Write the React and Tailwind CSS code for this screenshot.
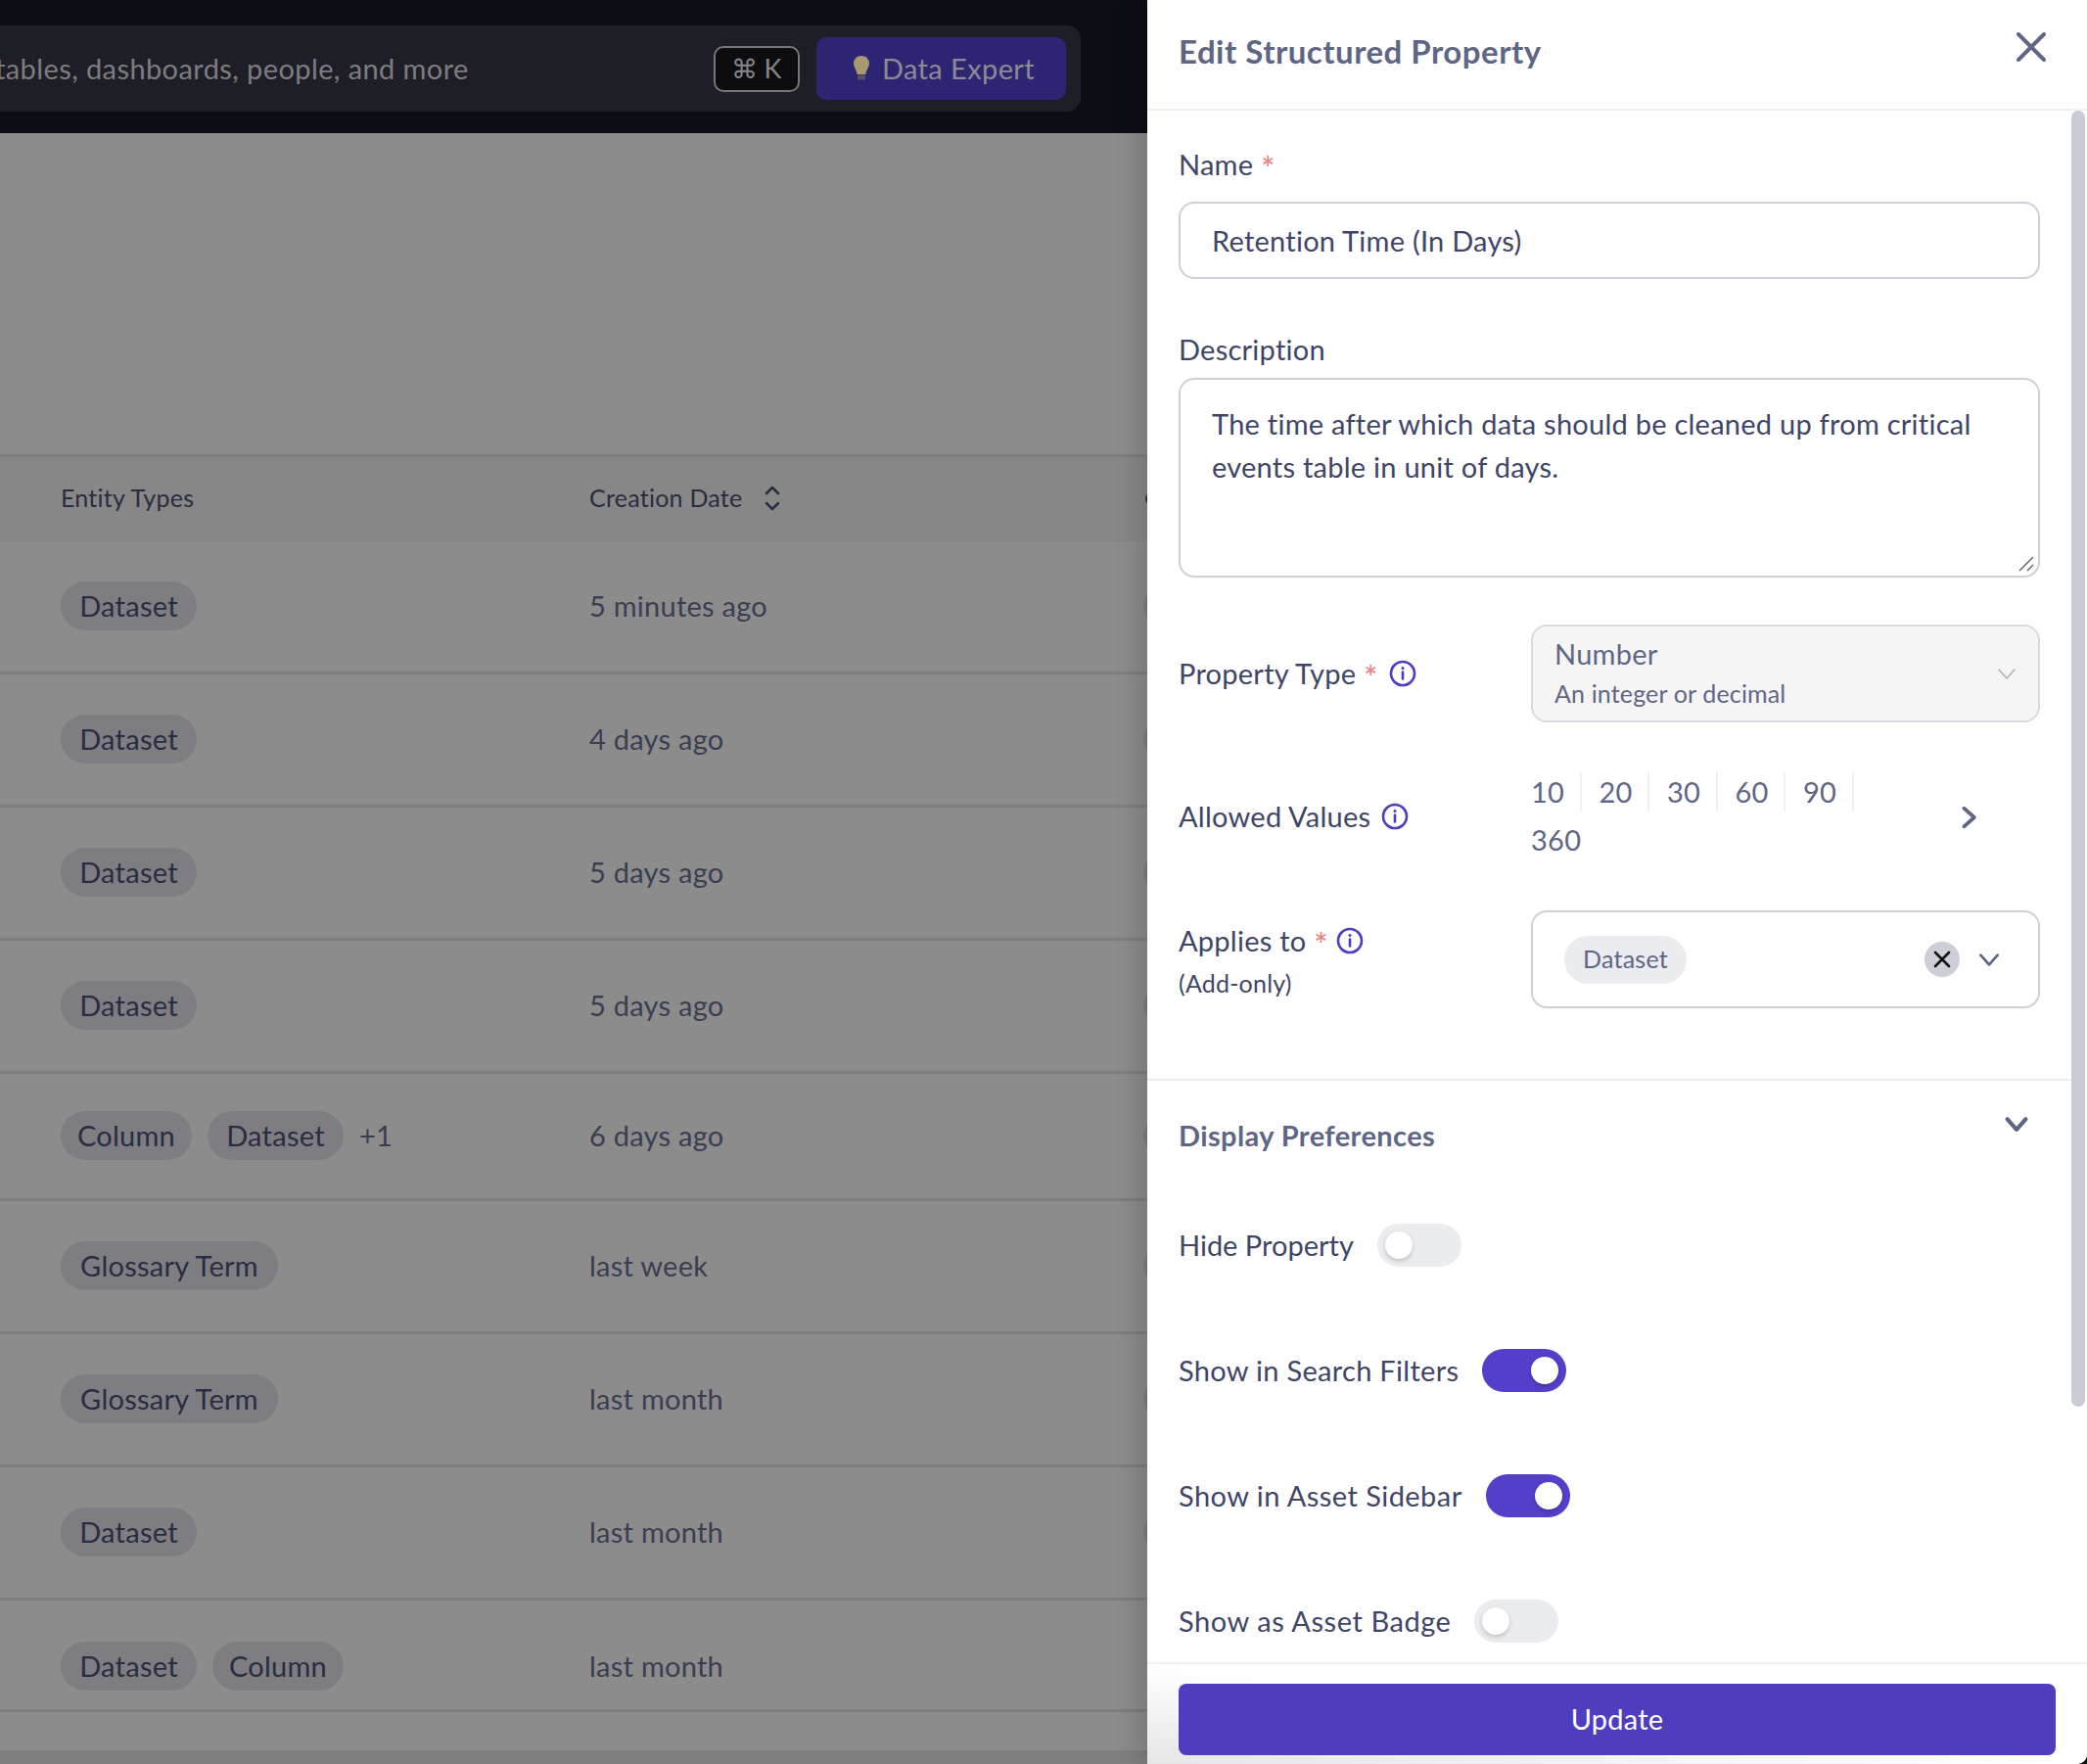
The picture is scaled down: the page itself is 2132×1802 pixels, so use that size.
const font = 'font-["Lato",sans-serif]';

const rows = [
    { tags: ['Dataset'], date: '5 minutes ago', h: 'h-[136px] pb-[2px]', avatar: true },
    { tags: ['Dataset'], date: '4 days ago', h: 'h-[136px] pb-[2px]', avatar: true },
    { tags: ['Dataset'], date: '5 days ago', h: 'h-[136px] pb-[2px]', avatar: true },
    { tags: ['Dataset'], date: '5 days ago', h: 'h-[136px] pb-[2px]', avatar: true },
    { tags: ['Column', 'Dataset'], extra: '+1', date: '6 days ago', h: 'h-[130px] pb-[2px]', avatar: true },
    { tags: ['Glossary Term'], date: 'last week', h: 'h-[136px] pb-[2px]', avatar: true },
    { tags: ['Glossary Term'], date: 'last month', h: 'h-[136px] pb-[2px]', avatar: true },
    { tags: ['Dataset'], date: 'last month', h: 'h-[136px] pb-[2px]', avatar: true },
    { tags: ['Dataset', 'Column'], date: 'last month', h: 'h-[114px] pt-[23px]' },
];

const tagWidths = {
    Dataset: 'w-[139px]',
    Column: 'w-[134px]',
    'Glossary Term': 'w-[222px]',
};

function InfoIcon() {
    return (
        <svg width="28" height="28" viewBox="0 0 28 28" fill="none" stroke="#4f3dbf" strokeWidth="2.600" className="shrink-0">
            <circle cx="14" cy="14" r="12" />
            <path d="M14 12.500v7" strokeLinecap="round" />
            <circle cx="14" cy="8.500" r="1.500" fill="#4f3dbf" stroke="none" />
        </svg>
    );
}

function Chevron({ className, color = '#5f6685', width = 3, size = 24 }) {
    return (
        <svg width={size} height={size} viewBox="0 0 24 24" fill="none" stroke={color} strokeWidth={width} strokeLinecap="round" strokeLinejoin="round" className={className}>
            <path d="M4 8l8 9 8-9" />
        </svg>
    );
}

function Star() {
    return <span className="text-[34px] leading-[0] align-[-6px] text-[#e5807f]">*</span>;
}

function Toggle({ on }) {
    return (
        <div className={`w-[86px] h-[44px] rounded-full flex items-center px-[8px] shrink-0 ${on ? 'bg-[#533fc9] justify-end' : 'bg-[#ebecf0] justify-start'}`}>
            <div className="w-[28px] h-[28px] rounded-full bg-white shadow-[0_2px_4px_rgba(0,0,0,0.2)]" />
        </div>
    );
}

function ToggleRow({ label, on, mt, tracking }) {
    return (
        <div className={`flex items-center gap-[24px] h-[44px] ${mt}`}>
            <span className={`text-[#3f4566] ${tracking}`}>{label}</span>
            <Toggle on={on} />
        </div>
    );
}

function Tag({ children }) {
    return <span className={`h-[50px] rounded-full bg-[#7e7e82] flex items-center justify-center text-[#2a2c40] ${tagWidths[children]}`}>{children}</span>;
}

export default function App() {
    return (
        <div className={`w-[2132px] h-[1802px] flex overflow-hidden bg-[#8c8c8c] text-[29px] tracking-[0.25px] ${font}`}>
            {/* dimmed page */}
            <div className="w-[1172px] h-full shrink-0 flex flex-col overflow-hidden">
                <div className="h-[136px] shrink-0 bg-[#0d0d14] flex items-start justify-end pt-[26px] pr-[68px]">
                    <div className="w-[1104px] h-[88px] bg-[#1d1e26] rounded-r-[14px] flex items-center justify-between pr-[15px] overflow-hidden">
                        <span className="text-[#7d7d80] whitespace-nowrap ml-[-5px] tracking-[0.4px]">tables, dashboards, people, and more</span>
                        <div className="flex items-center gap-[17px]">
                            <div className="w-[88px] h-[47px] rounded-[10px] border-2 border-[#77777a] bg-[#0d0d10] flex items-center justify-center text-[27px] text-[#858588] gap-[6px]">
                                <span>⌘</span><span>K</span>
                            </div>
                            <div className="w-[255px] h-[64px] rounded-[10px] bg-[#2d2473] flex items-center justify-center gap-[12px] text-[#8b8b93] tracking-[0.4px] pl-[5px]">
                                <svg width="18" height="28" viewBox="0 0 18 28">
                                    <path d="M9 1c4.600 0 8 3.400 8 7.800 0 3.800-3 6.400-3.600 11.200H4.600C4 15.200 1 12.600 1 8.800 1 4.400 4.400 1 9 1z" fill="#a8996f" />
                                    <rect x="5" y="20.500" width="8" height="5" rx="1.500" fill="#55555a" />
                                </svg>
                                <span>Data Expert</span>
                            </div>
                        </div>
                    </div>
                </div>
                <div className="h-[328px] shrink-0" />
                <div className="h-[89px] shrink-0 bg-[#878787] border-t-[3px] border-[#7e7e7e] flex items-center pl-[62px] text-[25px] text-[#2a2c40] pb-[2px]">
                    <span className="w-[540px] shrink-0">Entity Types</span>
                    <span className="shrink-0">Creation Date</span>
                    <svg width="18" height="28" viewBox="0 0 18 28" fill="none" stroke="#2a2c40" strokeWidth="2.500" strokeLinecap="round" strokeLinejoin="round" className="ml-[22px] shrink-0">
                        <path d="M3 9l6-6 6 6M3 19l6 6 6-6" />
                    </svg>
                    <div className="ml-auto w-[8px] h-[13px] rounded-l-full bg-[#2a2c40] mr-[-6px] shrink-0" />
                </div>
                {rows.map((r, i) => (
                    <div key={i} className={`${r.h} shrink-0 border-b-[3px] border-[#7e7e7e] flex items-center pl-[62px]`}>
                        <div className="w-[540px] flex items-center gap-[16px] shrink-0">
                            {r.tags.map(t => <Tag key={t}>{t}</Tag>)}
                            {r.extra && <span className="text-[#3b3d50]">{r.extra}</span>}
                        </div>
                        <span className="w-[566px] shrink-0 text-[#3b3d50]">{r.date}</span>
                        {r.avatar && <div className="w-[40px] h-[40px] rounded-full bg-[#7f7f80] shrink-0" />}
                    </div>
                ))}
                <div className="flex-1" />
                <div className="h-[14px] shrink-0 bg-[#7f7f7f]" />
            </div>

            {/* drawer */}
            <div className="w-[960px] h-full shrink-0 bg-[#111] shadow-[-10px_0_24px_rgba(0,0,0,0.14)]">
                <div className="w-full h-full bg-white flex flex-col rounded-br-[10px] overflow-hidden">
                    <div className="h-[113px] shrink-0 border-b-2 border-[#f0f0f2] flex items-start justify-between pl-[32px] pr-[42px]">
                        <span className="text-[33px] tracking-[0.5px] font-bold text-[#5f6685] mt-[28px]">Edit Structured Property</span>
                        <svg width="30" height="30" viewBox="0 0 30 30" stroke="#5f6685" strokeWidth="4" strokeLinecap="round" className="mt-[33px]">
                            <path d="M2 2l26 26M28 2L2 28" />
                        </svg>
                    </div>
                    <div className="flex-1 min-h-0 relative overflow-hidden pl-[32px] pr-[48px] text-[#3f4566]">
                        <div className="absolute right-[2px] top-0 w-[14px] h-[1324px] rounded-full bg-[#c9ccd4]" />
                        <div className="mt-[36px] leading-[38px]">Name <Star /></div>
                        <div className="mt-[19px] h-[79px] rounded-[16px] border-2 border-[#cdd0d8] flex items-center px-[32px]">Retention Time (In Days)</div>
                        <div className="mt-[53px] leading-[38px]">Description</div>
                        <div className="mt-[10px] h-[204px] rounded-[16px] border-2 border-[#cdd0d8] px-[32px] pt-[23px] leading-[44px] relative">
                            The time after which data should be cleaned up from critical events table in unit of days.
                            <svg width="20" height="20" viewBox="0 0 20 20" stroke="#666" strokeWidth="1.500" className="absolute right-[2px] bottom-[2px]">
                                <path d="M3 17L17 3M11 17l6-6" />
                            </svg>
                        </div>
                        <div className="mt-[48px] flex items-center h-[100px]">
                            <div className="w-[360px] shrink-0 flex items-center gap-[11px]">
                                <span>Property Type <Star /></span>
                                <InfoIcon />
                            </div>
                            <div className="flex-1 h-full rounded-[16px] border-2 border-[#d9dae0] bg-[#f5f5f5] flex items-center justify-between pl-[22px] pr-[20px]">
                                <div className="flex flex-col">
                                    <span className="leading-[40px] text-[#5f6685]">Number</span>
                                    <span className="text-[25px] tracking-[0.15px] leading-[40px] text-[#5f6685]">An integer or decimal</span>
                                </div>
                                <Chevron color="#aeb0b8" width={1.500} size={24} />
                            </div>
                        </div>
                        <div className="mt-[51px] flex items-start h-[96px]">
                            <div className="w-[360px] shrink-0 flex items-center gap-[11px] h-[90px]">
                                <span>Allowed Values</span>
                                <InfoIcon />
                            </div>
                            <div className="flex-1 flex items-center">
                                <div className="w-[450px] text-[#5f6685]">
                                    <div className="flex h-[40px] items-center">
                                        {['10', '20', '30', '60', '90'].map(v => (
                                            <span key={v} className="w-[51.500px] mr-[18px] h-[40px] flex items-center border-r-2 border-[#f0f0f2] shrink-0">{v}</span>
                                        ))}
                                    </div>
                                    <div className="h-[57px] flex items-center">360</div>
                                </div>
                                <Chevron className="-rotate-90 -ml-[17px] -mt-[5px]" size={28} width={3.200} />
                            </div>
                        </div>
                        <div className="mt-[45px] flex items-center h-[100px]">
                            <div className="w-[360px] shrink-0">
                                <div className="flex items-center gap-[8px] h-[40px]">
                                    <span>Applies to <Star /></span>
                                    <InfoIcon />
                                </div>
                                <div className="text-[25px] tracking-[0.2px] mt-[8px] leading-[30px]">(Add-only)</div>
                            </div>
                            <div className="flex-1 h-full rounded-[16px] border-2 border-[#cdd0d8] flex items-center pl-[32px] pr-[37px]">
                                <span className="h-[49px] w-[125px] rounded-full bg-[#ebecf0] flex items-center justify-center text-[25px] text-[#5f6685]">Dataset</span>
                                <div className="ml-auto w-[36px] h-[36px] rounded-full bg-[#cdcfd6] flex items-center justify-center">
                                    <svg width="18" height="18" viewBox="0 0 18 18" stroke="#111" strokeWidth="2.600" strokeLinecap="round"><path d="M2 2l14 14M16 2L2 16" /></svg>
                                </div>
                                <Chevron className="ml-[17px]" size={26} width={2.500} />
                            </div>
                        </div>
                        <div className="mt-[72px] h-[2px] bg-[#ebecf0] -ml-[32px] -mr-[32px]" />
                        <div className="mt-[36px] flex items-start justify-between">
                            <span className="font-bold text-[#5f6685] leading-[40px] tracking-[0.4px]">Display Preferences</span>
                            <Chevron className="mr-[10px] -mt-[6px]" size={28} width={3.600} />
                        </div>
                        <ToggleRow label="Hide Property" tracking="tracking-[0px]" mt="mt-[70px]" />
                        <ToggleRow label="Show in Search Filters" tracking="tracking-[0.3px]" on mt="mt-[84px]" />
                        <ToggleRow label="Show in Asset Sidebar" tracking="tracking-[0.45px]" on mt="mt-[84px]" />
                        <ToggleRow label="Show as Asset Badge" tracking="tracking-[0.55px]" mt="mt-[84px]" />
                    </div>
                    <div className="h-[104px] shrink-0 border-t-2 border-[#f0f0f2] pt-[20px] px-[32px] bg-linear-to-tr from-[#e6e6e6] to-white to-50%">
                        <div className="h-[73px] rounded-[8px] bg-[#4f3dbf] flex items-center justify-center text-white pb-[2px]">Update</div>
                    </div>
                </div>
            </div>
        </div>
    );
}
